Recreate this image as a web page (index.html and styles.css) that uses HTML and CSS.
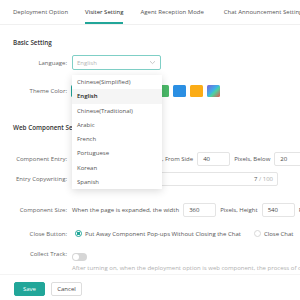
FILE: index.html
```html
<!DOCTYPE html>
<html lang="en">
<head>
  <meta charset="UTF-8">
  <meta name="viewport" content="width=device-width, initial-scale=1.0">
  <link rel="stylesheet" href="styles.css">
</head>
<body>
  <nav class="tabs">
    <span class="tab">Deployment Option</span>
    <span class="tab active">Visiter Setting</span>
    <span class="tab">Agent Reception Mode</span>
    <span class="tab">Chat Announcement Setting</span>
  </nav>

  <div class="content">
    <h3 class="section-title">Basic Setting</h3>

    <div class="row row-language">
      <label class="label">Language:</label>
      <div class="field">
        <div class="select">
          <span>English</span>
          <svg class="chevron" width="7" height="5" viewBox="0 0 7 5"><path d="M1 1.2 L3.5 3.6 L6 1.2" fill="none" stroke="#bbb" stroke-width="0.8"/></svg>
        </div>
        <ul class="dropdown">
          <li>Chinese(Simplified)</li>
          <li class="selected">English</li>
          <li>Chinese(Traditional)</li>
          <li>Arabic</li>
          <li>French</li>
          <li>Portuguese</li>
          <li>Korean</li>
          <li>Spanish</li>
        </ul>
      </div>
    </div>

    <div class="row row-theme">
      <label class="label">Theme Color:</label>
      <div class="swatches">
        <span class="swatch" style="background:#21a59a"></span>
        <span class="swatch" style="background:#1fb6d3"></span>
        <span class="swatch" style="background:#7b61d9"></span>
        <span class="swatch" style="background:#e8564c"></span>
        <span class="swatch" style="background:#f27b3b"></span>
        <span class="swatch" style="background:#4ab868"></span>
        <span class="swatch" style="background:#2b8fe3"></span>
        <span class="swatch" style="background:#fbac16"></span>
        <span class="swatch gradient"></span>
      </div>
    </div>

    <h3 class="section-title section-web">Web Component Settings</h3>

    <div class="row row-entry">
      <label class="label">Component Entry:</label>
      <div class="field inline">
        <span>Lower right corner of the screen, From Side</span>
        <span class="input small">40</span>
        <span>Pixels, Below</span>
        <span class="input small">20</span>
        <span>Pixels</span>
      </div>
    </div>

    <div class="row row-copy">
      <label class="label">Entry Copywriting:</label>
      <div class="input wide"><span class="count">7 / 100</span></div>
    </div>

    <div class="row row-size">
      <label class="label">Component Size:</label>
      <div class="field inline">
        <span>When the page is expanded, the width</span>
        <span class="input small">360</span>
        <span>Pixels, Height</span>
        <span class="input small">540</span>
        <span>Pixels</span>
      </div>
    </div>

    <div class="row row-close">
      <label class="label">Close Button:</label>
      <div class="field inline radios">
        <span class="radio checked"></span>
        <span>Put Away Component Pop-ups Without Closing the Chat</span>
        <span class="radio second"></span>
        <span>Close Chat</span>
      </div>
    </div>

    <div class="row row-track">
      <label class="label">Collect Track:</label>
      <div class="field">
        <span class="switch"></span>
        <p class="help">After turning on, when the deployment option is web component, the process of collecting visitor tracks will start</p>
      </div>
    </div>
  </div>

  <footer class="footer">
    <button class="btn primary">Save</button>
    <button class="btn">Cancel</button>
  </footer>
</body>
</html>
```

FILE: styles.css
```css
:root {
  --teal: #22a699;
  --text: #333;
  --label: #666;
  --border: #e4e4e4;
}

body {
  margin: 0;
  font-family: "Open Sans", "Noto Sans", sans-serif;
  font-size: 6px;
  color: var(--text);
  background-color: white;
  overflow: hidden;
}

.tabs {
  display: flex;
  gap: 17px;
  padding-left: 13px;
  height: 24px;
  border-bottom: 1px solid #f0f0f0;
  white-space: nowrap;
}

.tab {
  display: flex;
  align-items: center;
  color: #555;
  border-bottom: 2px solid transparent;
  padding-top: 1px;
}

.tab:last-child {
  margin-left: 3px;
}

.tab.active {
  color: #222;
  border-bottom-color: var(--teal);
}

.content {
  padding-left: 13px;
}

.section-title {
  margin: 13px 0 0;
  height: 10px;
  line-height: 10px;
  font-size: 6.3px;
  font-weight: 600;
  color: #333;
  white-space: nowrap;
}

.section-web {
  margin-top: 25px;
}

.row {
  display: flex;
  align-items: center;
  height: 15px;
  white-space: nowrap;
}

.label {
  width: 54px;
  flex-shrink: 0;
  text-align: right;
  color: var(--label);
  margin-right: 5px;
}

.row-language { margin-top: 7px; }
.row-theme { margin-top: 13px; }
.row-entry { margin-top: 18px; }
.row-copy { margin-top: 5px; }
.row-size { margin-top: 16px; }
.row-close { margin-top: 9px; }
.row-track { margin-top: 9px; align-items: flex-start; }

.field {
  position: relative;
}

.inline {
  display: flex;
  align-items: center;
  gap: 4px;
  color: #555;
}

.select {
  box-sizing: border-box;
  width: 89px;
  height: 15px;
  border: 1px solid #7fcfc6;
  border-radius: 2px;
  display: flex;
  align-items: center;
  justify-content: space-between;
  padding: 0 4px;
  color: #b5b5b5;
}

.dropdown {
  position: absolute;
  top: 20px;
  left: 0;
  width: 90px;
  margin: 0;
  padding: 0;
  list-style: none;
  background: white;
  box-shadow: 0 2px 8px rgba(0, 0, 0, 0.15);
  z-index: 2;
}

.dropdown li {
  height: 14.3px;
  line-height: 14.3px;
  padding-left: 5px;
  color: #555;
}

.dropdown li.selected {
  background-color: #f5f5f5;
  font-weight: 600;
  color: #222;
}

.swatches {
  display: flex;
  gap: 4px;
  margin-left: -1px;
}

.swatch {
  width: 13px;
  height: 12px;
  border-radius: 1.5px;
}

.swatch.gradient {
  background: linear-gradient(135deg, #7b61d9 0%, #3fb0e8 45%, #4dd1a0 60%, #e8564c 100%);
}

.input {
  box-sizing: border-box;
  height: 14px;
  border: 1px solid var(--border);
  border-radius: 2px;
  display: flex;
  align-items: center;
  padding: 0 5px;
  color: #444;
}

.input.small {
  width: 33px;
}

.input.wide {
  width: 206px;
  justify-content: flex-end;
  padding-right: 4px;
}

.count {
  color: #aaa;
}

.count::first-letter {
  color: #555;
}

.radios {
  gap: 3px;
}

.radio {
  box-sizing: border-box;
  width: 7px;
  height: 7px;
  border-radius: 50%;
  border: 1px solid #d8d8d8;
  margin-left: 3px;
}

.radio.checked {
  border: 1px solid var(--teal);
  background: radial-gradient(circle, var(--teal) 0 1.6px, white 1.8px);
}

.radio.second {
  margin-left: 10px;
}

.switch {
  display: block;
  box-sizing: border-box;
  width: 15px;
  height: 8px;
  margin-top: 3px;
  border-radius: 4px;
  background: #d6d6d6;
  position: relative;
}

.switch::after {
  content: "";
  position: absolute;
  left: 1px;
  top: 1px;
  width: 6px;
  height: 6px;
  border-radius: 50%;
  background: white;
}

.help {
  margin: 2px 0 0;
  line-height: 10px;
  color: #b0b0b0;
}

.footer {
  margin-top: 9px;
  border-top: 1px solid #f4f4f4;
  padding: 7px 14px 0;
  display: flex;
  gap: 6px;
}

.btn {
  font-family: inherit;
  font-size: 6px;
  height: 14px;
  width: 31px;
  padding: 0;
  border: 1px solid #ddd;
  border-radius: 2px;
  background: white;
  color: #444;
}

.btn.primary {
  background-color: var(--teal);
  border-color: var(--teal);
  color: white;
}
```
